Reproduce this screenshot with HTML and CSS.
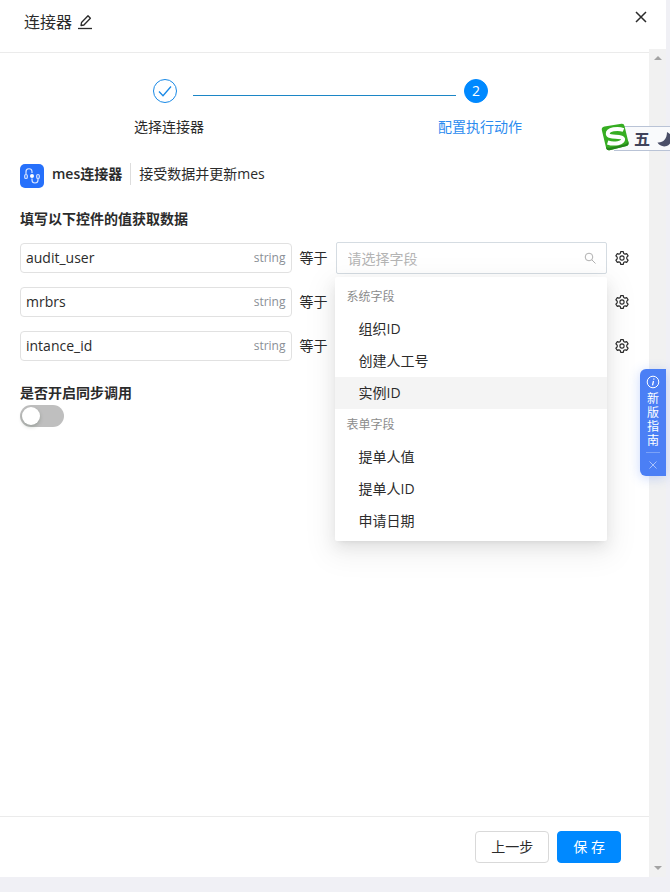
FILE: index.html
```html
<!DOCTYPE html>
<html lang="zh-CN">
<head>
    <meta charset="UTF-8">
    <meta name="viewport" content="width=device-width, initial-scale=1">
    <title>连接器</title>
    <link rel="stylesheet" href="styles.css">
</head>
<body>
    <svg width="0" height="0" class="sprite" aria-hidden="true">
        <symbol id="gear" viewBox="0 0 14 14">
            <path d="M5.700.7h2.600l.4 1.700 1.400.8 1.700-.5 1.300 2.200L11.800 6.200v1.600l1.300 1.300-1.300 2.200-1.700-.5-1.400.8-.4 1.700H5.700l-.4-1.700-1.400-.8-1.700.5L.9 9.100l1.300-1.300V6.200L.9 4.900l1.300-2.200 1.700.5 1.400-.8z" fill="none" stroke="currentColor" stroke-width="1.200" stroke-linejoin="round"/>
            <circle cx="7" cy="7" r="2.100" fill="none" stroke="currentColor" stroke-width="1.100"/>
        </symbol>
    </svg>

    <div class="drawer">
        <div class="panel">
            <header class="header">
                <h1 class="title">连接器</h1>
                <button class="icon-btn" aria-label="编辑名称">
                    <svg width="16" height="16" viewBox="0 0 16 16" fill="none" stroke="currentColor" stroke-width="1.3">
                        <path d="M4 11.500l.5-3L11 1.800l2.400 2.400L6.900 11z" stroke-linejoin="round"/>
                        <path d="M1 14.500h14"/>
                    </svg>
                </button>
                <button class="icon-btn close" aria-label="关闭">
                    <svg width="12" height="12" viewBox="0 0 12 12" fill="none" stroke="currentColor" stroke-width="1.5">
                        <path d="M1 1l10 10M11 1L1 11"/>
                    </svg>
                </button>
            </header>

            <main class="content">
                <ol class="steps">
                    <li class="step">
                        <span class="step-icon">
                            <svg width="14" height="14" viewBox="0 0 14 14" fill="none" stroke="currentColor" stroke-width="1.3">
                                <path d="M1 7.500l4 4.200L13 2.500"/>
                            </svg>
                        </span>
                        <span class="step-title">选择连接器</span>
                    </li>
                    <li class="step-line" role="presentation"></li>
                    <li class="step active">
                        <span class="step-icon">2</span>
                        <span class="step-title">配置执行动作</span>
                    </li>
                </ol>

                <div class="connector">
                    <svg class="logo" width="24" height="24" viewBox="0 0 24 24">
                        <rect width="24" height="24" rx="5" fill="#2670fb"/>
                        <g fill="none" stroke="#d5e3ff" stroke-width="1.200">
                            <path d="M6 10V8a3 3 0 0 1 6-.5V9"/>
                            <path d="M12 14.500V16a3 3 0 0 0 6 0v-1.500"/>
                            <rect x="4.700" y="10.500" width="2.600" height="4" rx="1.300"/>
                            <rect x="16.700" y="10.500" width="2.600" height="4" rx="1.300"/>
                        </g>
                        <circle cx="12" cy="12" r="2" fill="#fff"/>
                    </svg>
                    <strong class="name">mes连接器</strong>
                    <span class="desc">接受数据并更新mes</span>
                </div>

                <h2 class="sub">填写以下控件的值获取数据</h2>

                <div class="fields">
                    <div class="row">
                        <label class="param"><input type="text" value="audit_user" readonly><span>string</span></label>
                        <span class="eq">等于</span>
                        <div class="picker">
                            <input type="text" role="combobox" aria-expanded="true" aria-controls="options" aria-label="字段" placeholder="请选择字段">
                            <svg class="search" width="12" height="12" viewBox="0 0 12 12" fill="none" stroke="currentColor">
                                <circle cx="5" cy="5" r="3.800"/>
                                <path d="M7.800 7.800L11.500 11.500"/>
                            </svg>
                            <div class="dropdown" id="options" role="listbox">
                                <div class="group">系统字段</div>
                                <div class="option" role="option">组织ID</div>
                                <div class="option" role="option">创建人工号</div>
                                <div class="option hover" role="option" aria-selected="true">实例ID</div>
                                <div class="group">表单字段</div>
                                <div class="option" role="option">提单人值</div>
                                <div class="option" role="option">提单人ID</div>
                                <div class="option" role="option">申请日期</div>
                            </div>
                        </div>
                        <button class="icon-btn" aria-label="设置"><svg width="14" height="14"><use href="#gear"/></svg></button>
                    </div>
                    <div class="row">
                        <label class="param"><input type="text" value="mrbrs" readonly><span>string</span></label>
                        <span class="eq">等于</span>
                        <div class="picker"><input type="text" aria-label="字段"></div>
                        <button class="icon-btn" aria-label="设置"><svg width="14" height="14"><use href="#gear"/></svg></button>
                    </div>
                    <div class="row">
                        <label class="param"><input type="text" value="intance_id" readonly><span>string</span></label>
                        <span class="eq">等于</span>
                        <div class="picker"><input type="text" aria-label="字段"></div>
                        <button class="icon-btn" aria-label="设置"><svg width="14" height="14"><use href="#gear"/></svg></button>
                    </div>
                </div>

                <label class="sub" for="sync">是否开启同步调用</label>
                <input class="switch" type="checkbox" role="switch" id="sync">
            </main>

            <footer class="footer">
                <button class="btn">上一步</button>
                <button class="btn primary">保 存</button>
            </footer>
        </div>

        <div class="scrollbar" aria-hidden="true">
            <span class="arrow up"></span>
            <span class="arrow down"></span>
        </div>

        <!-- 新版指南 -->
        <aside class="guide">
            <svg width="14" height="14" viewBox="0 0 14 14" fill="none" stroke="currentColor">
                <circle cx="7" cy="7" r="5.800"/>
                <path d="M7.500 6l-1 4.300M7.900 3.500l-.2 1.100" stroke-width="1.300"/>
            </svg>
            <span class="guide-text">新版指南</span>
            <button class="guide-close" aria-label="关闭指南">
                <svg width="8" height="8" viewBox="0 0 8 8" fill="none" stroke="currentColor">
                    <path d="M.5.5l7 7M7.500.5l-7 7"/>
                </svg>
            </button>
        </aside>
    </div>

    <!-- 输入法状态栏 -->
    <div class="ime">
        <svg class="ime-logo" width="28" height="28" viewBox="0 0 28 28">
            <path d="M3.500 3.500L20.500.8q2.500-.3 3 2.200l4 16.500q.5 2.700-2 3.500L8.500 27.200q-2.700.5-3.300-2L.8 7q-.5-2.900 2.700-3.500z" fill="#36ad22"/>
            <path d="M5.200 25.200q.6 2.500 3.300 2l17-4.200q2.500-.8 2-3.500l-.4-1.500q0 2.500-2.600 3.200l-16 3.500q-2.600.5-3.500-1z" fill="#25851a"/>
            <path d="M22.500 7C17 4.800 6.500 6 6.800 10.800c.2 4.500 15 1.400 15.300 5.400.2 4-9 5.500-15.500 3.300" fill="none" stroke="#fff" stroke-width="4"/>
        </svg>
        <span class="ime-mode">五</span>
        <svg class="ime-moon" width="16" height="16" viewBox="0 0 16 16">
            <path d="M10 1a7.500 7.500 0 1 1-9.500 10.500C6 12 10 8 10 1z" fill="#4b4f68"/>
        </svg>
    </div>
</body>
</html>
```
FILE: styles.css
```css
* {
    box-sizing: border-box;
}

body {
    margin: 0;
    height: 100vh;
    padding: 0 4px 15px 0;
    position: relative;
    overflow: hidden;
    background: #f0f0f5;
    color: #2b2b2b;
    font: 14px/22px "Open Sans", "Noto Sans CJK SC", sans-serif;
}

button, input {
    font: inherit;
    color: inherit;
}

.sprite {
    position: absolute;
}

.drawer {
    position: relative;
    display: flex;
    height: 100%;
    background: #fff;
}

.panel {
    flex: 1;
    min-width: 0;
    display: flex;
    flex-direction: column;
}

/* 头部 */
.header {
    display: flex;
    align-items: center;
    gap: 5px;
    height: 53px;
    padding: 0 2px 8px 24px;
    border-bottom: 1px solid #ebebeb;
}

.title {
    margin: 0;
    font-size: 16px;
    font-weight: 400;
}

.icon-btn {
    display: flex;
    padding: 0;
    border: 0;
    background: none;
    cursor: pointer;
}

.close {
    margin: 0 0 10px auto;
}

.content {
    flex: 1;
    padding: 26px 20px 0;
}

/* 步骤条 */
.steps {
    display: flex;
    margin: 0 0 25px;
    padding: 0 107px 0 114px;
    list-style: none;
}

.step {
    display: flex;
    flex-direction: column;
    align-items: center;
    gap: 13px;
}

.step-icon {
    display: flex;
    align-items: center;
    justify-content: center;
    width: 24px;
    height: 24px;
    margin-right: 8px;
    border: 1px solid #1989e6;
    border-radius: 50%;
    color: #1989e6;
}

.step-line {
    flex: 1;
    height: 1px;
    margin: 16px -18px 0 -11px;
    background: #1c86c6;
}

.active .step-icon {
    border-color: #0089ff;
    background: #0089ff;
    color: #fff;
}

.active .step-title {
    color: #2b8bef;
}

/* 连接器信息 */
.connector {
    display: flex;
    align-items: flex-start;
    margin-bottom: 20px;
}

.logo {
    margin: 1px 8px 0 0;
}

.name {
    font-weight: 600;
}

.desc {
    margin-left: 8px;
    padding-left: 8px;
    border-left: 1px solid #ddd;
}

.sub {
    display: block;
    margin: 0;
    font-size: 14px;
    font-weight: 600;
}

/* 字段映射 */
.fields {
    display: grid;
    gap: 12px;
    margin: 12px 0 20px;
}

.row {
    display: grid;
    grid-template-columns: 1fr 28px 1fr 14px;
    align-items: center;
    gap: 8px;
    height: 32px;
}

.param {
    display: flex;
    align-items: center;
    min-width: 0;
    height: 30px;
    padding: 0 5px;
    border: 1px solid #e1e1e1;
    border-radius: 4px;
}

.param input {
    flex: 1;
    min-width: 0;
    padding: 0;
    border: 0;
    outline: 0;
    background: none;
}

.param span {
    color: #8a8f96;
    font-size: 12px;
}

.picker {
    position: relative;
    min-width: 0;
}

.picker input {
    display: block;
    width: 100%;
    height: 32px;
    padding: 0 32px 0 11px;
    border: 1px solid #d5dce2;
    border-radius: 2px;
    background: #fff;
}

.picker input::placeholder {
    color: #b4b4b4;
}

.search {
    position: absolute;
    top: 10px;
    right: 11px;
    color: #b0b0b0;
}

.dropdown {
    position: absolute;
    top: 35px;
    left: -1px;
    right: 0;
    z-index: 1;
    padding: 4px 0;
    border-radius: 2px;
    background: #fff;
    box-shadow: 0 3px 6px -4px rgba(0, 0, 0, 0.12), 0 6px 16px rgba(0, 0, 0, 0.08), 0 9px 28px 8px rgba(0, 0, 0, 0.05);
}

.group, .option {
    height: 32px;
    padding: 5px 12px;
}

.group {
    color: #8c8c8c;
    font-size: 12px;
}

.option {
    padding-left: 24px;
    cursor: pointer;
}

.option.hover {
    background: #f4f4f4;
}

.switch {
    appearance: none;
    display: block;
    width: 44px;
    height: 22px;
    margin: 1px 0 0;
    padding: 2px;
    border-radius: 11px;
    background: #bfbfbf;
}

.switch::before {
    content: "";
    display: block;
    width: 18px;
    height: 18px;
    border-radius: 50%;
    background: #fff;
    box-shadow: 0 2px 4px rgba(0, 35, 11, 0.2);
}

.switch:checked {
    background: #0089ff;
}

.switch:checked::before {
    margin-left: auto;
}

/* 底部按钮 */
.footer {
    display: flex;
    justify-content: flex-end;
    gap: 8px;
    padding: 14px 28px;
    border-top: 1px solid #ebebeb;
}

.btn {
    height: 32px;
    padding: 0 15px;
    border: 1px solid #d9d9d9;
    border-radius: 4px;
    background: #fff;
    cursor: pointer;
}

.primary {
    border-color: #0089ff;
    background: #0089ff;
    color: #fff;
}

/* 滚动条 */
.scrollbar {
    display: flex;
    flex-direction: column;
    align-items: center;
    justify-content: space-between;
    width: 17px;
    margin-top: 49px;
    padding: 7px 0;
    background: #f1f1f1;
}

.arrow {
    border: 4px solid transparent;
}

.up {
    margin-top: -4px;
    border-bottom-color: #a3a3a3;
}

.down {
    margin-bottom: -4px;
    border-top-color: #a3a3a3;
}

/* 悬浮的指南标签 */
.guide {
    position: absolute;
    top: 369px;
    right: 0;
    display: flex;
    flex-direction: column;
    align-items: center;
    width: 26px;
    padding: 6px 6px 0;
    border-radius: 6px 0 0 6px;
    background: #4b7ff5;
    box-shadow: 0 2px 12px rgba(75, 127, 245, 0.3);
    color: #fff;
}

.guide-text {
    width: 12px;
    margin: 3px 0 4px;
    font-size: 12px;
    line-height: 14px;
}

.guide-close {
    display: flex;
    align-items: center;
    justify-content: center;
    width: 14px;
    height: 24px;
    padding: 0;
    border: 0;
    border-top: 1px solid #7ba2f8;
    background: none;
    color: #a9c2fb;
}

/* 输入法 */
.ime {
    position: absolute;
    top: 126px;
    right: 0;
    display: flex;
    align-items: center;
    width: 56px;
    height: 25px;
    padding-left: 20px;
    border: 1px solid #b9c3d6;
    border-width: 1px 0;
    background: #f9fafc;
    color: #3f435a;
}

.ime-logo {
    position: absolute;
    top: -4px;
    left: -13px;
}

.ime-mode {
    font-size: 16px;
    font-weight: 700;
}

.ime-moon {
    flex: none;
    margin-left: 7px;
}
```
